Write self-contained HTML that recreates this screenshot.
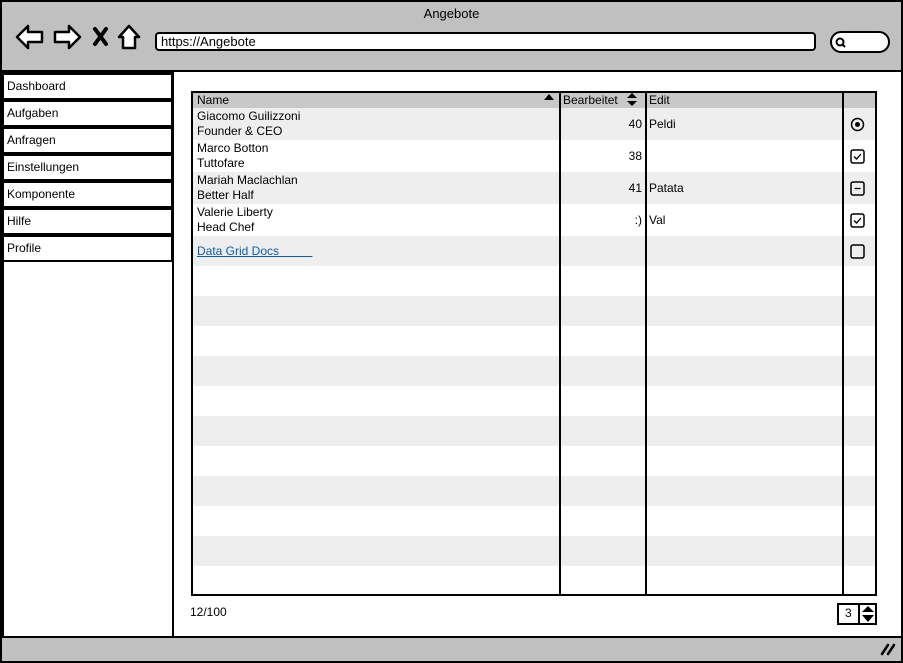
<html><head><style>
body{margin:0;width:903px;height:663px;position:relative;font-family:"Liberation Sans",sans-serif;font-size:12px;color:#000;background:#fff;overflow:hidden}
div{position:absolute;box-sizing:border-box}
.b{border:2px solid #000}
.nav{left:2px;width:171px;height:27px;border:2px solid #000;background:#fff;padding:4px 3px;font-size:12px}
.g{background:#eee;left:193px;width:682px}
.t{font-size:12px;line-height:15px}
.vl{top:91px;height:503px;width:2px;background:#000}
svg.cb{position:absolute;left:850px}
</style></head><body>
<div class="b" style="left:0;top:0;width:903px;height:663px;background:#fff"></div>
<div style="left:2px;top:2px;width:899px;height:70px;background:#c0c0c0;border-bottom:2px solid #000"></div>
<div class="t" style="left:0;width:903px;top:6px;text-align:center;font-size:13px">Angebote</div>
<svg style="position:absolute;left:14px;top:23px" width="130" height="28" viewBox="0 0 130 28">
<path d="M3 14 L14 3 L14 9 L28 9 L28 19 L14 19 L14 25 Z" fill="#fff" stroke="#000" stroke-width="2.5" stroke-linejoin="round"/>
<path d="M66 14 L55 3 L55 9 L41 9 L41 19 L55 19 L55 25 Z" fill="#fff" stroke="#000" stroke-width="2.5" stroke-linejoin="round"/>
<path d="M81 6 L92 21 M92 6 L81 21" stroke="#000" stroke-width="4" stroke-linecap="round"/>
<path d="M105 14 L115 3 L125 14 L121 14 L121 25 L109 25 L109 14 Z" fill="#fff" stroke="#000" stroke-width="2.5" stroke-linejoin="round"/>
</svg>
<div style="left:155px;top:32px;width:661px;height:19px;border:2px solid #000;border-radius:4px;background:#fff;padding:0 4px;font-size:13px;line-height:15px">https://Angebote</div>
<div style="left:830px;top:31px;width:60px;height:22px;border:2px solid #000;border-radius:11px;background:#fff"></div>
<svg style="position:absolute;left:834px;top:36px" width="14" height="14"><circle cx="6" cy="6" r="3.5" fill="none" stroke="#000" stroke-width="2"/><path d="M8.5 8.5 L11 11" stroke="#000" stroke-width="2"/></svg>
<div style="left:2px;top:72px;width:172px;height:566px;border:2px solid #000;background:#fff"></div>
<div class="nav" style="top:73px">Dashboard</div>
<div class="nav" style="top:100px">Aufgaben</div>
<div class="nav" style="top:127px">Anfragen</div>
<div class="nav" style="top:154px">Einstellungen</div>
<div class="nav" style="top:181px">Komponente</div>
<div class="nav" style="top:208px">Hilfe</div>
<div class="nav" style="top:235px">Profile</div>
<div style="left:2px;top:636px;width:899px;height:25px;background:#c0c0c0;border-top:2px solid #000"></div>
<svg style="position:absolute;left:880px;top:642px" width="18" height="14"><path d="M2 12 L8 3 M8 12 L14 3" stroke="#000" stroke-width="2.5" stroke-linecap="round"/></svg>
<div class="b" style="left:191px;top:91px;width:686px;height:505px;background:#fff"></div>
<div style="left:193px;top:93px;width:682px;height:15px;background:#c8c8c8"></div>
<div class="g" style="top:108px;height:32px"></div>
<div class="g" style="top:172px;height:32px"></div>
<div class="g" style="top:236px;height:30px"></div>
<div class="g" style="top:296px;height:30px"></div>
<div class="g" style="top:356px;height:30px"></div>
<div class="g" style="top:416px;height:30px"></div>
<div class="g" style="top:476px;height:30px"></div>
<div class="g" style="top:536px;height:30px"></div>
<div class="vl" style="left:559px"></div>
<div class="vl" style="left:645px"></div>
<div class="vl" style="left:842px"></div>
<div class="t" style="left:197px;top:93px">Name</div>
<svg style="position:absolute;left:544px;top:94px" width="10" height="6"><path d="M0 6 L5 0 L10 6 Z"/></svg>
<div class="t" style="left:563px;top:93px">Bearbeitet</div>
<svg style="position:absolute;left:627px;top:93px" width="10" height="13"><path d="M0 5 L5 0 L10 5 Z M0 8 L5 13 L10 8 Z"/></svg>
<div class="t" style="left:649px;top:93px">Edit</div>
<div class="t" style="left:197px;top:109px">Giacomo Guilizzoni<br>Founder &amp; CEO</div>
<div class="t" style="left:197px;top:141px">Marco Botton<br>Tuttofare</div>
<div class="t" style="left:197px;top:173px">Mariah Maclachlan<br>Better Half</div>
<div class="t" style="left:197px;top:205px">Valerie Liberty<br>Head Chef</div>
<div class="t" style="left:197px;top:244px;color:#0a5fa8;text-decoration:underline">Data Grid Docs&nbsp;&nbsp;&nbsp;&nbsp;&nbsp;&nbsp;&nbsp;&nbsp;&nbsp;&nbsp;</div>
<div class="t" style="left:600px;width:42px;text-align:right;top:117px">40</div>
<div class="t" style="left:600px;width:42px;text-align:right;top:149px">38</div>
<div class="t" style="left:600px;width:42px;text-align:right;top:181px">41</div>
<div class="t" style="left:600px;width:42px;text-align:right;top:213px">:)</div>
<div class="t" style="left:649px;top:117px">Peldi</div>
<div class="t" style="left:649px;top:181px">Patata</div>
<div class="t" style="left:649px;top:213px">Val</div>
<svg class="cb" style="top:117px" width="15" height="15"><circle cx="7.5" cy="7.5" r="6" fill="none" stroke="#000" stroke-width="1.5"/><circle cx="7.5" cy="7.5" r="2.5"/></svg>
<svg class="cb" style="top:149px" width="15" height="15"><rect x="1" y="1" width="13" height="13" rx="2" fill="none" stroke="#000" stroke-width="1.5"/><path d="M4 7.5 L6.5 10 L11 5" fill="none" stroke="#000" stroke-width="1.3"/></svg>
<svg class="cb" style="top:181px" width="15" height="15"><rect x="1" y="1" width="13" height="13" rx="2" fill="none" stroke="#000" stroke-width="1.5"/><path d="M4.5 7.5 L10.5 7.5" stroke="#000" stroke-width="1.3"/></svg>
<svg class="cb" style="top:213px" width="15" height="15"><rect x="1" y="1" width="13" height="13" rx="2" fill="none" stroke="#000" stroke-width="1.5"/><path d="M4 7.5 L6.5 10 L11 5" fill="none" stroke="#000" stroke-width="1.3"/></svg>
<svg class="cb" style="top:244px" width="15" height="15"><rect x="1" y="1" width="13" height="13" rx="2" fill="none" stroke="#000" stroke-width="1.5"/></svg>
<div class="t" style="left:190px;top:605px">12/100</div>
<div style="left:837px;top:603px;width:40px;height:22px;border:2px solid #000;background:#fff"></div>
<div style="left:858px;top:603px;width:2px;height:22px;background:#000"></div>
<div class="t" style="left:845px;top:606px">3</div>
<svg style="position:absolute;left:862px;top:606px" width="12" height="16"><path d="M0 6 L6 0 L12 6 Z M0 9 L6 16 L12 9 Z"/></svg>
</body></html>
